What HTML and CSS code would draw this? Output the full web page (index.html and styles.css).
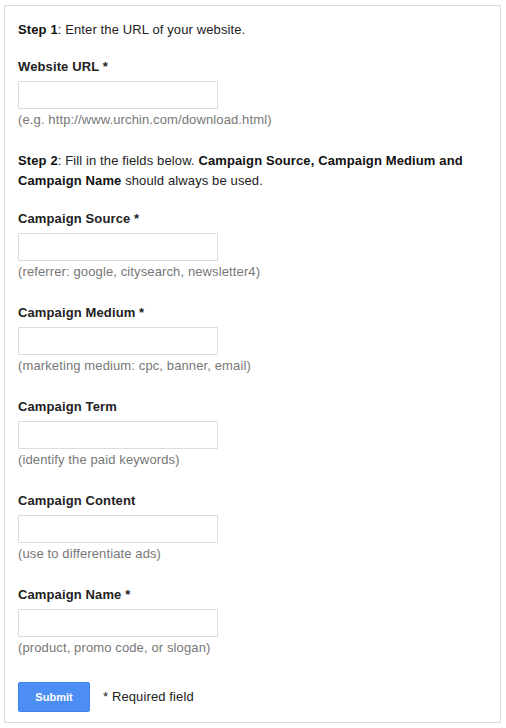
FILE: index.html
```html
<!DOCTYPE html>
<html>
<head>
<meta charset="utf-8">
<title>URL Builder</title>
<link rel="stylesheet" href="styles.css">
</head>
<body>
<form class="panel">
  <p class="step"><b>Step 1</b>: Enter the URL of your website.</p>
  <div class="field first">
    <label class="label">Website URL *</label>
    <input class="input" type="text">
    <div class="hint">(e.g. http://www.urchin.com/download.html)</div>
  </div>
  <p class="step step2"><b>Step 2</b>: Fill in the fields below. <b>Campaign Source, Campaign Medium and Campaign Name</b> should always be used.</p>
  <div class="field after-step">
    <label class="label">Campaign Source *</label>
    <input class="input" type="text">
    <div class="hint">(referrer: google, citysearch, newsletter4)</div>
  </div>
  <div class="field">
    <label class="label">Campaign Medium *</label>
    <input class="input" type="text">
    <div class="hint">(marketing medium: cpc, banner, email)</div>
  </div>
  <div class="field">
    <label class="label">Campaign Term</label>
    <input class="input" type="text">
    <div class="hint">(identify the paid keywords)</div>
  </div>
  <div class="field">
    <label class="label">Campaign Content</label>
    <input class="input" type="text">
    <div class="hint">(use to differentiate ads)</div>
  </div>
  <div class="field">
    <label class="label">Campaign Name *</label>
    <input class="input" type="text">
    <div class="hint">(product, promo code, or slogan)</div>
  </div>
  <div class="actions">
    <button class="submit" type="button">Submit</button>
    <span class="req">* Required field</span>
  </div>
</form>
</body>
</html>
```
FILE: styles.css
```css
html, body {
  margin: 0;
  padding: 0;
  background: #fff;
}
body {
  font-family: "Liberation Sans", Arial, Helvetica, sans-serif;
  font-size: 13px;
  letter-spacing: 0.12px;
  color: #222;
}
.panel {
  margin: 5px 5px 4px 4px;
  border: 1px solid #dcdcdc;
  padding: 14px 13px 10px 13px;
}
.step {
  margin: 0;
  line-height: 20px;
}
.step b {
  font-weight: bold;
  color: #111;
}
.step2 {
  margin-top: 23px;
}
.field {
  margin-top: 25px;
}
.field.first {
  margin-top: 19px;
}
.field.after-step {
  margin-top: 20px;
}
.label {
  display: block;
  font-weight: bold;
  line-height: 16px;
  margin-bottom: 6px;
  color: #222;
}
.input {
  display: block;
  box-sizing: border-box;
  width: 200px;
  height: 28px;
  margin: 0;
  padding: 0 6px;
  border: 1px solid #dcdcdc;
  border-radius: 1px;
  background: #fff;
  font: inherit;
}
.hint {
  margin-top: 3px;
  line-height: 16px;
  color: #777;
}
.actions {
  margin-top: 26px;
  display: flex;
  align-items: center;
  gap: 13px;
}
.submit {
  box-sizing: border-box;
  width: 72px;
  height: 30px;
  margin: 0;
  padding: 0;
  border: 1px solid #3f84f0;
  border-radius: 2px;
  background: #4d8ef5;
  color: #fff;
  font-family: "Liberation Sans", Arial, sans-serif;
  font-size: 11px;
  font-weight: bold;
  letter-spacing: 0;
}
.req {
  line-height: 16px;
  color: #222;
}
```
